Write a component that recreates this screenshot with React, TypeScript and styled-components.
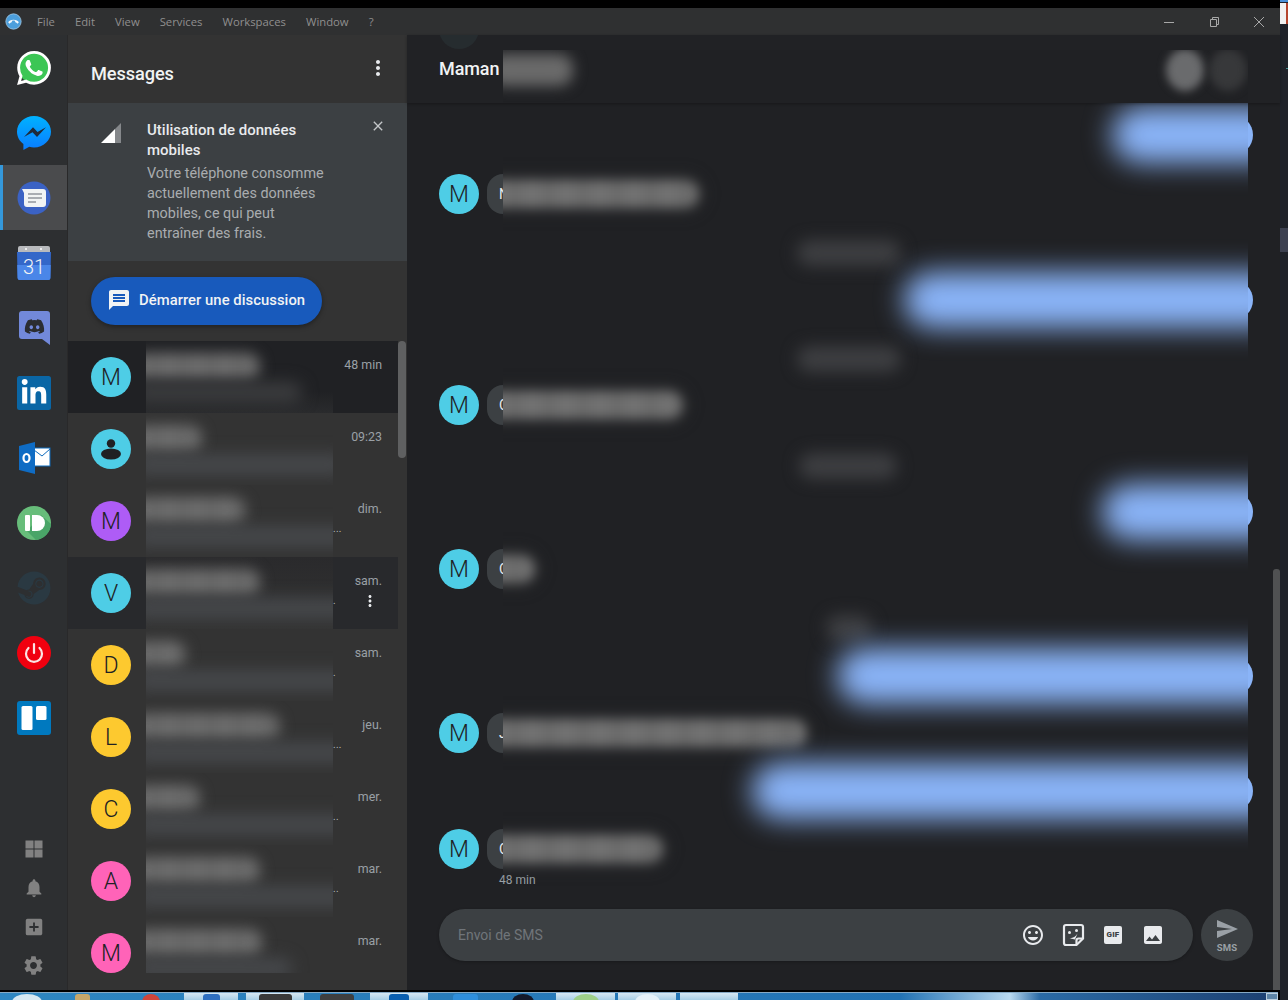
import styled, { createGlobalStyle } from 'styled-components';
import { FaDiscord, FaLinkedinIn, FaSteam } from 'react-icons/fa';
import {
  MdAddBox,
  MdClose,
  MdImage,
  MdInsertEmoticon,
  MdMessage,
  MdMoreVert,
  MdNotifications,
  MdSend,
  MdSettings,
} from 'react-icons/md';

const GlobalStyle = createGlobalStyle`
  html, body {
    margin: 0;
    padding: 0;
    background: #000;
    font-family: Roboto, "Liberation Sans", sans-serif;
  }
  * { box-sizing: border-box; }
`;

const Page = styled.div`
  width: 1288px;
  height: 1000px;
  display: flex;
  overflow: hidden;
  background: #000;
`;

const Desktop = styled.div`
  width: 1280px;
  display: flex;
  flex-direction: column;
  padding-top: 8px;
`;

const TitleBar = styled.div`
  height: 27px;
  display: flex;
  align-items: center;
  background: #2f3031;
  padding-left: 5px;
`;

const AppLogo = styled.svg`
  width: 17px;
  height: 17px;
  margin-right: 15px;
`;

const MenuItem = styled.span`
  font-family: "Open Sans", sans-serif;
  font-size: 11.3px;
  color: #8f8f8f;
  margin-right: 20px;
`;

const WindowControls = styled.div`
  margin-left: auto;
  display: flex;
  gap: 31px;
  padding-right: 14px;
  color: #a8a8a8;

  svg {
    display: block;
    width: 14px;
    height: 14px;
  }
`;

const Main = styled.div`
  height: 955px;
  display: flex;
`;

const ServiceBar = styled.nav`
  width: 68px;
  display: flex;
  flex-direction: column;
  background: #2d2f31;
  border-right: 1px solid #29292a;
`;

const ServiceItem = styled.div<{ $active?: boolean }>`
  height: 65px;
  display: flex;
  align-items: center;
  justify-content: center;
  background: ${({ $active }) => ($active ? '#4a4b4d' : 'transparent')};
  border-left: 3px solid ${({ $active }) => ($active ? '#3498db' : 'transparent')};
  padding-right: 3px;

  > svg {
    width: 34px;
    height: 34px;
    display: block;
  }
`;

const ToolGroup = styled.div`
  margin-top: auto;
  padding-bottom: 5px;
  display: flex;
  flex-direction: column;
`;

const ToolItem = styled.div`
  height: 39px;
  display: flex;
  align-items: center;
  justify-content: center;
  color: #818181;
`;

const ListPanel = styled.section`
  width: 339px;
  display: flex;
  flex-direction: column;
  background: #333333;
`;

const PanelHeader = styled.header`
  height: 68px;
  display: flex;
  align-items: flex-start;
  justify-content: space-between;
  padding: 21px 17px 0 23px;
  color: #e8eaed;
`;

const PanelTitle = styled.h1`
  margin: 7px 0 0;
  font-size: 18.2px;
  line-height: 22px;
  font-weight: 500;
  letter-spacing: -0.1px;
  color: #f1f3f4;
`;

const Banner = styled.div`
  height: 158px;
  display: flex;
  background: #3c4043;
  padding: 17px 21px 0 33px;
`;

const SignalIcon = styled.svg`
  width: 20px;
  height: 20px;
  margin: 3px 26px 0 0;
  flex: none;
`;

const BannerText = styled.div`
  width: 184px;
`;

const BannerTitle = styled.div`
  font-size: 15px;
  line-height: 20px;
  font-weight: 500;
  color: #e8eaed;
`;

const BannerBody = styled.div`
  font-size: 14.4px;
  line-height: 20px;
  color: #a9acaf;
  margin-top: 4px;
`;

const BannerClose = styled.div`
  margin-left: auto;
  margin-top: -2px;
  color: #c4c7c9;
  line-height: 0;
`;

const StartArea = styled.div`
  height: 80px;
  padding: 16px 0 0 23px;
`;

const StartButton = styled.button`
  height: 48px;
  width: 231px;
  display: flex;
  align-items: center;
  gap: 8px;
  padding: 0 0 2px 16px;
  border: none;
  border-radius: 24px;
  background: #185abc;
  color: #f1f3f4;
  font-family: Roboto, sans-serif;
  font-size: 14.8px;
  font-weight: 500;
  letter-spacing: 0.05px;
  white-space: nowrap;
  box-shadow: 0 2px 5px rgba(0, 0, 0, 0.35);
`;

const ListArea = styled.div`
  flex: 1;
  display: flex;
  min-height: 0;
`;

const Rows = styled.div`
  width: 330px;
`;

const ListRail = styled.div`
  width: 9px;
  padding: 0 1px 0 0;
`;

const ListThumb = styled.div`
  height: 117px;
  border-radius: 4px;
  background: #5f6061;
`;

const Row = styled.div<{ $tone: 'open' | 'hover' | 'plain' }>`
  height: 72px;
  display: flex;
  padding-left: 23px;
  background: ${({ $tone }) =>
    $tone === 'open' ? '#202124' : $tone === 'hover' ? '#28292c' : 'transparent'};
`;

const Avatar = styled.div<{ $color: string }>`
  width: 40px;
  height: 40px;
  flex: none;
  border-radius: 50%;
  display: flex;
  align-items: center;
  justify-content: center;
  background: ${({ $color }) => $color};
  color: #202124;
  font-size: 23px;
  font-weight: 300;
`;

const RowAvatar = styled(Avatar)`
  margin: 16px 15px 0 0;
`;

const RowMask = styled.div<{ $tone: 'open' | 'hover' | 'plain'; $cut?: boolean }>`
  width: 187px;
  height: ${({ $cut }) => ($cut ? '56px' : '72px')};
  flex: none;
  overflow: hidden;
  background: ${({ $tone }) =>
    $tone === 'open'
      ? 'linear-gradient(#202124 70%, #2a2b2d)'
      : $tone === 'hover'
        ? 'linear-gradient(#2a2a2c, #333333)'
        : 'transparent'};
`;

const NameBlur = styled.div<{ $w: number }>`
  width: ${({ $w }) => $w}px;
  height: 27px;
  margin: 12px 0 0 -14px;
  border-radius: 13px;
  background: repeating-linear-gradient(90deg, #6e6e6e 0 18px, #676767 18px 28px);
  filter: blur(7px);
`;

const SnippetBlur = styled.div<{ $w: number; $dim?: boolean }>`
  width: ${({ $w }) => $w}px;
  height: 21px;
  margin: 2px 0 0 -14px;
  border-radius: 10px;
  background: ${({ $dim }) => ($dim ? '#3b3c3e' : '#46484b')};
  filter: blur(8px);
`;

const Meta = styled.div`
  flex: 1;
  display: flex;
  flex-direction: column;
  padding: 17px 16px 0 0;
`;

const Stamp = styled.div`
  font-size: 12.4px;
  line-height: 14px;
  text-align: right;
  color: #9aa0a6;
`;

const MetaLine = styled.div`
  height: 20px;
  margin-top: 3px;
  display: flex;
  align-items: center;
  justify-content: space-between;
  color: #e8eaed;
`;

const Dots = styled.span`
  font-size: 10px;
  line-height: 12px;
  letter-spacing: 0.3px;
  color: #b9bcbf;
`;

const Kebab = styled.span`
  display: flex;
  margin-right: 3px;
`;

const Chat = styled.section`
  flex: 1;
  min-width: 0;
  display: flex;
  flex-direction: column;
  background: #202124;
`;

const ChatHeader = styled.header`
  position: relative;
  z-index: 1;
  height: 68px;
  flex: none;
  display: flex;
  padding-left: 32px;
  background: #212225;
  box-shadow: 0 1px 3px rgba(0, 0, 0, 0.3);
  overflow: hidden;
`;

const GhostAvatar = styled.div`
  position: absolute;
  left: 32px;
  top: -26px;
  width: 40px;
  height: 40px;
  border-radius: 50%;
  background: #262c2f;
`;

const ContactName = styled.div`
  width: 64px;
  flex: none;
  padding-top: 23px;
  font-size: 18px;
  line-height: 21px;
  font-weight: 500;
  color: #f1f3f4;
  letter-spacing: -0.1px;
`;

const HeaderMask = styled.div`
  width: 745px;
  height: 53px;
  margin-top: 15px;
  display: flex;
  overflow: hidden;
  background: #202124;
`;

const HeaderNameBlur = styled.div`
  width: 84px;
  height: 32px;
  margin: 4px 0 0 -14px;
  border-radius: 14px;
  background: #6a6a6a;
  filter: blur(7px);
`;

const HeaderAction = styled.div<{ $color: string }>`
  width: 38px;
  height: 42px;
  margin-top: -1px;
  border-radius: 50%;
  background: ${({ $color }) => $color};
  filter: blur(4px);
`;

const HeaderActions = styled.div`
  margin-left: auto;
  display: flex;
  gap: 5px;
  padding-right: 1px;
`;

const ChatBody = styled.div`
  flex: 1;
  min-height: 0;
  display: flex;
`;

const Conversation = styled.div`
  flex: 1;
  padding: 12px 0 0 32px;
  display: flex;
  flex-direction: column;
`;

const ChatRail = styled.div`
  width: 7px;
  display: flex;
  flex-direction: column;
  justify-content: flex-end;
`;

const ChatThumb = styled.div`
  height: 421px;
  border-radius: 3px 3px 0 0;
  background: #505152;
`;

const MessageRow = styled.div<{ $gap: number }>`
  height: 40px;
  display: flex;
  margin-top: ${({ $gap }) => $gap}px;
  flex: none;
`;

const LeftSlot = styled.div`
  width: 64px;
  flex: none;
  display: flex;
`;

const ReceivedStub = styled.div`
  width: 16px;
  margin-left: 8px;
  height: 40px;
  padding-left: 12px;
  border-radius: 20px 0 0 20px;
  background: #3c4043;
  color: #e8eaed;
  font-size: 14px;
  line-height: 40px;
  overflow: hidden;
`;

const MessageMask = styled.div`
  width: 745px;
  flex: none;
  height: 40px;
  display: flex;
  align-items: center;
  clip-path: inset(-60px 0);
`;

const ReceivedBlur = styled.div<{ $w: number }>`
  width: ${({ $w }) => $w}px;
  height: 28px;
  margin-left: -16px;
  border-radius: 14px;
  background: repeating-linear-gradient(90deg, #717171 0 22px, #6a6a6a 22px 34px);
  box-shadow: 0 0 10px 4px #2a2b2d;
  filter: blur(6px);
`;

const SentBlur = styled.div<{ $left: number }>`
  flex: 1 0 auto;
  height: 56px;
  margin-left: ${({ $left }) => $left}px;
  margin-right: -40px;
  border-radius: 28px;
  background: #8ab4f8;
  filter: blur(14px);
`;

const TimeBlur = styled.div<{ $left: number; $w: number }>`
  width: ${({ $w }) => $w}px;
  height: 26px;
  margin-left: ${({ $left }) => $left}px;
  border-radius: 13px;
  background: #3d3e41;
  filter: blur(8px);
`;

const SentEdge = styled.div`
  width: 5px;
  height: 40px;
  flex: none;
  overflow: hidden;
  display: flex;
  justify-content: flex-end;
`;

const SentCap = styled.div`
  width: 40px;
  height: 40px;
  flex: none;
  border-radius: 50%;
  background: #8ab4f8;
`;

const LastStamp = styled.div`
  margin: 4px 0 0 60px;
  font-size: 12px;
  line-height: 14px;
  color: #9aa0a6;
`;

const Composer = styled.div`
  margin-top: 22px;
  display: flex;
  gap: 8px;
`;

const ComposerField = styled.div`
  width: 754px;
  height: 52px;
  display: flex;
  align-items: center;
  padding: 0 20px 0 19px;
  border-radius: 26px;
  background: #3c4043;
  box-shadow: 0 1px 3px rgba(0, 0, 0, 0.25);
`;

const Placeholder = styled.span`
  font-size: 14px;
  color: #70757a;
  margin-right: auto;
`;

const ComposerTool = styled.div`
  width: 40px;
  height: 40px;
  display: flex;
  align-items: center;
  justify-content: center;
  color: #e8eaed;
`;

const GifBadge = styled.div`
  width: 18px;
  height: 18px;
  border-radius: 2px;
  background: #e8eaed;
  color: #3c4043;
  font-size: 8px;
  line-height: 18px;
  font-weight: 900;
  text-align: center;
  letter-spacing: 0.2px;
`;

const SendButton = styled.div`
  width: 52px;
  height: 52px;
  border-radius: 50%;
  background: #3c4043;
  color: #9aa0a6;
  display: flex;
  flex-direction: column;
  align-items: center;
  padding-top: 8px;
  font-size: 9.5px;
  line-height: 12px;
  font-weight: 700;
  letter-spacing: 0.2px;
`;

const SendGlyph = styled.span`
  display: flex;
  height: 25px;
`;

const BlackLine = styled.div`
  height: 2px;
  flex: none;
`;

const Taskbar = styled.footer`
  width: 1278px;
  height: 8px;
  display: flex;
  overflow: hidden;
  border-top: 1px solid #86a9c4;
  background: linear-gradient(
    90deg,
    #2e86c1 0,
    #2272b3 900px,
    #b8d9f0 1010px,
    #2a6aa5 1040px,
    #1c3f70 1278px
  );
`;

const TaskButton = styled.div<{ $w: number; $ml: number }>`
  width: ${({ $w }) => $w}px;
  margin-left: ${({ $ml }) => $ml}px;
  flex: none;
  display: flex;
  justify-content: center;
  background: linear-gradient(#d6e8f3, #a9cfe6);
`;

const TaskGlyph = styled.div<{ $w: number; $ml?: number; $color: string; $round?: boolean }>`
  width: ${({ $w }) => $w}px;
  height: 16px;
  flex: none;
  margin-left: ${({ $ml }) => $ml ?? 0}px;
  margin-top: 1px;
  border-radius: ${({ $round }) => ($round ? '50%' : '3px 3px 0 0')};
  background: ${({ $color }) => $color};
`;

const ShowDesktop = styled.div`
  width: 12px;
  margin-left: auto;
  flex: none;
  border: 1px solid #b9cddc;
  background: #5d84a6;
`;

const RightStrip = styled.aside`
  width: 8px;
  display: flex;
  flex-direction: column;
  background: #1f2229;
`;

const StripTop = styled.div`
  height: 2px;
  background: #4a90d9;
`;

const StripTab = styled.div`
  height: 21px;
  margin-top: 1px;
  background: linear-gradient(90deg, #f1f1f1 0 6px, #b5452e 6px);
`;

const StripDot = styled.div`
  width: 2px;
  height: 1px;
  margin-top: 44px;
  margin-left: 6px;
  background: #3f8f8f;
`;

const StripBlock = styled.div`
  height: 24px;
  margin-top: 159px;
  background: #3d4150;
`;

const Calendar = () => (
  <svg viewBox="0 0 34 34">
    <rect x="1" y="0" width="32" height="9" rx="2" fill="#b8babd" />
    <circle cx="9" cy="3" r="1" fill="#fff" />
    <circle cx="24" cy="3" r="1" fill="#fff" />
    <path d="M0 6h34l-.6 26a2 2 0 0 1-2 2H2.600a2 2 0 0 1-2-2z" fill="#3367c9" />
    <path d="M.2 19h33.500l-.3 13a2 2 0 0 1-2 2H2.600a2 2 0 0 1-2-2z" fill="#4a86e8" />
    <text x="17" y="28" textAnchor="middle" fontSize="20" fontFamily="Roboto, sans-serif" fontWeight="300" fill="#f1f3f4">
      31
    </text>
  </svg>
);

const services = [
  <svg viewBox="0 0 24 24" key="whatsapp">
    <circle cx="12" cy="12" r="11" fill="#3cc655" />
    <path
      fill="#fff"
      d="M17.472 14.382c-.297-.149-1.758-.867-2.03-.967-.273-.099-.471-.148-.67.15-.197.297-.767.966-.94 1.164-.173.199-.347.223-.644.075-.297-.15-1.255-.463-2.39-1.475-.883-.788-1.48-1.761-1.653-2.059-.173-.297-.018-.458.13-.606.134-.133.298-.347.446-.52.149-.174.198-.298.298-.497.099-.198.05-.371-.025-.52-.075-.149-.669-1.612-.916-2.207-.242-.579-.487-.5-.669-.51-.173-.008-.371-.01-.57-.01-.198 0-.52.074-.792.372-.272.297-1.04 1.016-1.04 2.479 0 1.462 1.065 2.875 1.213 3.074.149.198 2.096 3.2 5.077 4.487.709.306 1.262.489 1.694.625.712.227 1.36.195 1.871.118.571-.085 1.758-.719 2.006-1.413.248-.694.248-1.289.173-1.413-.074-.124-.272-.198-.57-.347m-5.421 7.403h-.004a9.87 9.87 0 01-5.031-1.378l-.361-.214-3.741.982.998-3.648-.235-.374a9.86 9.86 0 01-1.51-5.26c.001-5.45 4.436-9.884 9.888-9.884 2.64 0 5.122 1.03 6.988 2.898a9.825 9.825 0 012.893 6.994c-.003 5.45-4.437 9.884-9.885 9.884m8.413-18.297A11.815 11.815 0 0012.05 0C5.495 0 .16 5.335.157 11.892c0 2.096.547 4.142 1.588 5.945L.057 24l6.305-1.654a11.882 11.882 0 005.683 1.448h.005c6.554 0 11.89-5.335 11.893-11.893a11.821 11.821 0 00-3.48-8.413z"
    />
  </svg>,
  <svg viewBox="0 0 34 34" key="messenger">
    <defs>
      <linearGradient id="msgr" x1="0" y1="0" x2="0" y2="1">
        <stop offset="0" stopColor="#00b2ff" />
        <stop offset="1" stopColor="#0a7cff" />
      </linearGradient>
    </defs>
    <path d="M17 0C7.600 0 0 7 0 15.700c0 5 2.500 9.400 6.400 12.200V34l5.900-3.200c1.500.4 3 .6 4.700.6 9.400 0 17-7 17-15.700S26.400 0 17 0z" fill="url(#msgr)" />
    <path d="M7 21l9-9.800 4.500 4.800 8.500-4.800-9 9.800-4.500-4.800z" fill="#1f2a3a" />
  </svg>,
  <svg viewBox="0 0 34 34" key="messages">
    <circle cx="17" cy="17" r="16.500" fill="#3b62c4" />
    <path d="M5 8h21a3 3 0 0 1 3 3v12a3 3 0 0 1-3 3H10a3 3 0 0 1-3-3V12z" fill="#f1f3f4" />
    <path d="M11 13h14M11 17h14M11 21h8" stroke="#a9adb3" strokeWidth="2" />
  </svg>,
  <Calendar key="calendar" />,
  <svg viewBox="0 0 34 34" key="discord">
    <path d="M5 0h25a3 3 0 0 1 3 3v31l-8-6H5a3 3 0 0 1-3-3V3a3 3 0 0 1 3-3z" fill="#7289da" />
    <FaDiscord x={7} y={5} size={21} color="#2b2d31" />
  </svg>,
  <svg viewBox="0 0 34 34" key="linkedin">
    <rect width="34" height="34" rx="2.500" fill="#0a66a5" />
    <FaLinkedinIn x={3} y={3} size={28} color="#fff" />
  </svg>,
  <svg viewBox="0 0 34 34" key="outlook">
    <rect x="17" y="7" width="16" height="18" fill="#fff" stroke="#0f6cbd" />
    <path d="M17 9l8 6 8-7" fill="none" stroke="#0f6cbd" />
    <path d="M2 5l16-4v32L2 29z" fill="#0f6cc4" />
    <ellipse cx="9.500" cy="17" rx="3" ry="4" fill="none" stroke="#fff" strokeWidth="2.200" />
  </svg>,
  <svg viewBox="0 0 34 34" key="pushbullet">
    <circle cx="17" cy="17" r="17" fill="#67bd7a" />
    <path d="M24 9l10 9a17 17 0 0 1-15 16l-9-9z" fill="#4aa568" />
    <rect x="8" y="9" width="5" height="16" rx="1" fill="#fff" />
    <path d="M15 9h5a8 8 0 0 1 0 16h-5z" fill="#fff" />
  </svg>,
  <svg viewBox="0 0 34 34" key="steam">
    <FaSteam x={0} y={0} size={34} color="#2a3942" />
  </svg>,
  <svg viewBox="0 0 34 34" key="power">
    <circle cx="17" cy="17" r="17" fill="#f0000f" />
    <path d="M11.500 12a8 8 0 1 0 11 0" fill="none" stroke="#fbe4e4" strokeWidth="2.200" strokeLinecap="round" />
    <path d="M17 8v9" stroke="#fbe4e4" strokeWidth="2.200" strokeLinecap="round" />
  </svg>,
  <svg viewBox="0 0 34 34" key="trello">
    <rect width="34" height="34" rx="3" fill="#0079bf" />
    <rect x="4.500" y="5" width="11" height="24" rx="1.500" fill="#fff" />
    <rect x="19" y="5" width="10.500" height="14" rx="1.500" fill="#fff" />
  </svg>,
];

type Tone = 'open' | 'hover' | 'plain';

const conversations: {
  letter?: string;
  color: string;
  time: string;
  name: number;
  snippet: number;
  dots?: string;
  tone: Tone;
}[] = [
  { letter: 'M', color: '#4ecde6', time: '48 min', name: 128, snippet: 170, tone: 'open' },
  { color: '#4ecde6', time: '09:23', name: 70, snippet: 215, tone: 'plain' },
  { letter: 'M', color: '#ae5cf6', time: 'dim.', name: 114, snippet: 225, dots: '...', tone: 'plain' },
  { letter: 'V', color: '#4ecde6', time: 'sam.', name: 128, snippet: 225, dots: '.', tone: 'hover' },
  { letter: 'D', color: '#fdc92f', time: 'sam.', name: 54, snippet: 225, dots: '.', tone: 'plain' },
  { letter: 'L', color: '#fdc92f', time: 'jeu.', name: 148, snippet: 225, dots: '...', tone: 'plain' },
  { letter: 'C', color: '#fdc92f', time: 'mer.', name: 68, snippet: 225, dots: '..', tone: 'plain' },
  { letter: 'A', color: '#ff63b8', time: 'mar.', name: 128, snippet: 225, dots: '..', tone: 'plain' },
  { letter: 'M', color: '#ff63b8', time: 'mar.', name: 130, snippet: 160, tone: 'plain' },
];

type Message =
  | { kind: 'sent'; gap: number; left: number }
  | { kind: 'time'; gap: number; left: number; w: number }
  | { kind: 'received'; gap: number; letter: string; w: number };

const messages: Message[] = [
  { kind: 'sent', gap: 0, left: 609 },
  { kind: 'received', gap: 19, letter: 'N', w: 212 },
  { kind: 'time', gap: 19, left: 294, w: 104 },
  { kind: 'sent', gap: 7, left: 401 },
  { kind: 'time', gap: 19, left: 294, w: 104 },
  { kind: 'received', gap: 6, letter: 'C', w: 196 },
  { kind: 'time', gap: 21, left: 296, w: 98 },
  { kind: 'sent', gap: 6, left: 599 },
  { kind: 'received', gap: 17, letter: 'C', w: 48 },
  { kind: 'time', gap: 19, left: 323, w: 46 },
  { kind: 'sent', gap: 8, left: 334 },
  { kind: 'received', gap: 17, letter: 'J', w: 320 },
  { kind: 'sent', gap: 18, left: 249 },
  { kind: 'received', gap: 18, letter: 'C', w: 176 },
];

const menu = ['File', 'Edit', 'View', 'Services', 'Workspaces', 'Window', '?'];

const StickerIcon = () => (
  <svg width="24" height="24" viewBox="0 0 24 24" fill="none" stroke="currentColor" strokeWidth="2.200">
    <path d="M5 2h15a2 2 0 0 1 2 2v11.500L15.500 22H5a2 2 0 0 1-2-2V4a2 2 0 0 1 2-2z" />
    <path d="M15.500 22v-4.500a2 2 0 0 1 2-2H22" />
    <circle cx="8.500" cy="9.500" r="1.500" fill="currentColor" stroke="none" />
    <circle cx="15.500" cy="7.500" r="1.500" fill="currentColor" stroke="none" />
    <path d="M7.500 15c3.500 .8 7-1 9-4.500l-2.500 6z" fill="currentColor" stroke="none" />
  </svg>
);

function ConversationRow({ item }: { item: (typeof conversations)[number] }) {
  return (
    <Row $tone={item.tone}>
      <RowAvatar $color={item.color}>
        {item.letter ?? (
          <svg width="26" height="26" viewBox="0 0 26 26" fill="#202124">
            <circle cx="13" cy="7.500" r="4.200" />
            <ellipse cx="13" cy="18" rx="10" ry="5.500" />
          </svg>
        )}
      </RowAvatar>
      <RowMask $tone={item.tone} $cut={item.snippet === 160}>
        <NameBlur $w={item.name} />
        <SnippetBlur $w={item.snippet} $dim={item.tone === 'open'} />
      </RowMask>
      <Meta>
        <Stamp>{item.time}</Stamp>
        <MetaLine>
          <Dots>{item.dots}</Dots>
          {item.tone === 'hover' && (
            <Kebab>
              <MdMoreVert size={18} />
            </Kebab>
          )}
        </MetaLine>
      </Meta>
    </Row>
  );
}

function MessageLine({ message }: { message: Message }) {
  return (
    <MessageRow $gap={message.gap}>
      <LeftSlot>
        {message.kind === 'received' && (
          <>
            <Avatar $color="#4ecde6">M</Avatar>
            <ReceivedStub>{message.letter}</ReceivedStub>
          </>
        )}
      </LeftSlot>
      <MessageMask>
        {message.kind === 'sent' && <SentBlur $left={message.left} />}
        {message.kind === 'time' && <TimeBlur $left={message.left} $w={message.w} />}
        {message.kind === 'received' && <ReceivedBlur $w={message.w} />}
      </MessageMask>
      {message.kind === 'sent' && (
        <SentEdge>
          <SentCap />
        </SentEdge>
      )}
    </MessageRow>
  );
}

export default function App() {
  return (
    <Page>
      <GlobalStyle />
      <Desktop>
        <TitleBar>
          <AppLogo viewBox="0 0 16 16">
            <circle cx="8" cy="8" r="7.200" fill="#4c9fdc" stroke="#9cc4e0" strokeWidth="0.800" />
            <path d="M3 9c1-3.500 9-3.500 10 0l-1.500 1c-.5-1-1-1-1.500-1L9 7H7L6 9c-.5 0-1 0-1.500 1z" fill="#f4f8fb" />
          </AppLogo>
          {menu.map((label) => (
            <MenuItem key={label}>{label}</MenuItem>
          ))}
          <WindowControls>
            <svg viewBox="0 0 14 14" stroke="currentColor" fill="none">
              <path d="M2 7.500h10" />
            </svg>
            <svg viewBox="0 0 14 14" stroke="currentColor" fill="none">
              <path d="M3.500 4.500h6v7h-6zM5.500 4.500v-2h6v7h-2" />
            </svg>
            <svg viewBox="0 0 14 14" stroke="currentColor" fill="none">
              <path d="M2 2l10 10M12 2L2 12" />
            </svg>
          </WindowControls>
        </TitleBar>

        <Main>
          <ServiceBar>
            {services.map((icon, i) => (
              <ServiceItem key={i} $active={i === 2}>
                {icon}
              </ServiceItem>
            ))}
            <ToolGroup>
              <ToolItem>
                <svg width="18" height="18" viewBox="0 0 18 18" fill="currentColor">
                  <rect width="8" height="8" x="0.500" y="0.500" />
                  <rect width="8" height="8" x="9.500" y="0.500" />
                  <rect width="8" height="8" x="0.500" y="9.500" />
                  <rect width="8" height="8" x="9.500" y="9.500" />
                </svg>
              </ToolItem>
              <ToolItem>
                <MdNotifications size={22} />
              </ToolItem>
              <ToolItem>
                <MdAddBox size={22} />
              </ToolItem>
              <ToolItem>
                <MdSettings size={23} />
              </ToolItem>
            </ToolGroup>
          </ServiceBar>

          <ListPanel>
            <PanelHeader>
              <PanelTitle>Messages</PanelTitle>
              <MdMoreVert size={24} />
            </PanelHeader>
            <Banner>
              <SignalIcon viewBox="0 0 20 20">
                <path d="M0 20L14 6v14z" fill="#fff" />
                <path d="M14 6l6-6v20h-6z" fill="#85888b" />
              </SignalIcon>
              <BannerText>
                <BannerTitle>Utilisation de données mobiles</BannerTitle>
                <BannerBody>Votre téléphone consomme actuellement des données mobiles, ce qui peut entraîner des frais.</BannerBody>
              </BannerText>
              <BannerClose>
                <MdClose size={16} />
              </BannerClose>
            </Banner>
            <StartArea>
              <StartButton>
                <MdMessage size={24} />
                Démarrer une discussion
              </StartButton>
            </StartArea>
            <ListArea>
              <Rows>
                {conversations.map((item, i) => (
                  <ConversationRow key={i} item={item} />
                ))}
              </Rows>
              <ListRail>
                <ListThumb />
              </ListRail>
            </ListArea>
          </ListPanel>

          <Chat>
            <ChatHeader>
              <GhostAvatar />
              <ContactName>Maman</ContactName>
              <HeaderMask>
                <HeaderNameBlur />
                <HeaderActions>
                  <HeaderAction $color="#6a6b6d" />
                  <HeaderAction $color="#37383a" />
                </HeaderActions>
              </HeaderMask>
            </ChatHeader>
            <ChatBody>
              <Conversation>
                {messages.map((message, i) => (
                  <MessageLine key={i} message={message} />
                ))}
                <LastStamp>48 min</LastStamp>
                <Composer>
                  <ComposerField>
                    <Placeholder>Envoi de SMS</Placeholder>
                    <ComposerTool>
                      <MdInsertEmoticon size={24} />
                    </ComposerTool>
                    <ComposerTool>
                      <StickerIcon />
                    </ComposerTool>
                    <ComposerTool>
                      <GifBadge>GIF</GifBadge>
                    </ComposerTool>
                    <ComposerTool>
                      <MdImage size={24} />
                    </ComposerTool>
                  </ComposerField>
                  <SendButton>
                    <SendGlyph>
                      <MdSend size={24} />
                    </SendGlyph>
                    SMS
                  </SendButton>
                </Composer>
              </Conversation>
              <ChatRail>
                <ChatThumb />
              </ChatRail>
            </ChatBody>
          </Chat>
        </Main>

        <BlackLine />
        <Taskbar>
          <TaskGlyph $w={30} $ml={12} $color="#d7e8f2" $round />
          <TaskGlyph $w={15} $ml={33} $color="#c8a86a" />
          <TaskGlyph $w={18} $ml={52} $color="#d0453a" $round />
          <TaskButton $w={54} $ml={24}>
            <TaskGlyph $w={17} $color="#2f6fc0" />
          </TaskButton>
          <TaskButton $w={58} $ml={8}>
            <TaskGlyph $w={33} $color="#3a3a3a" />
          </TaskButton>
          <TaskGlyph $w={34} $ml={16} $color="#3f3f3f" />
          <TaskButton $w={58} $ml={16}>
            <TaskGlyph $w={20} $color="#0a5fb0" />
          </TaskButton>
          <TaskGlyph $w={25} $ml={25} $color="#2f8fdc" />
          <TaskGlyph $w={22} $ml={34} $color="#141a2b" $round />
          <TaskButton $w={59} $ml={22}>
            <TaskGlyph $w={26} $color="#9ed08a" $round />
          </TaskButton>
          <TaskButton $w={58} $ml={3}>
            <TaskGlyph $w={25} $color="#e6f2f9" $round />
          </TaskButton>
          <TaskButton $w={58} $ml={4} />
          <ShowDesktop />
        </Taskbar>
      </Desktop>
      <RightStrip>
        <StripTop />
        <StripTab />
        <StripDot />
        <StripBlock />
      </RightStrip>
    </Page>
  );
}
